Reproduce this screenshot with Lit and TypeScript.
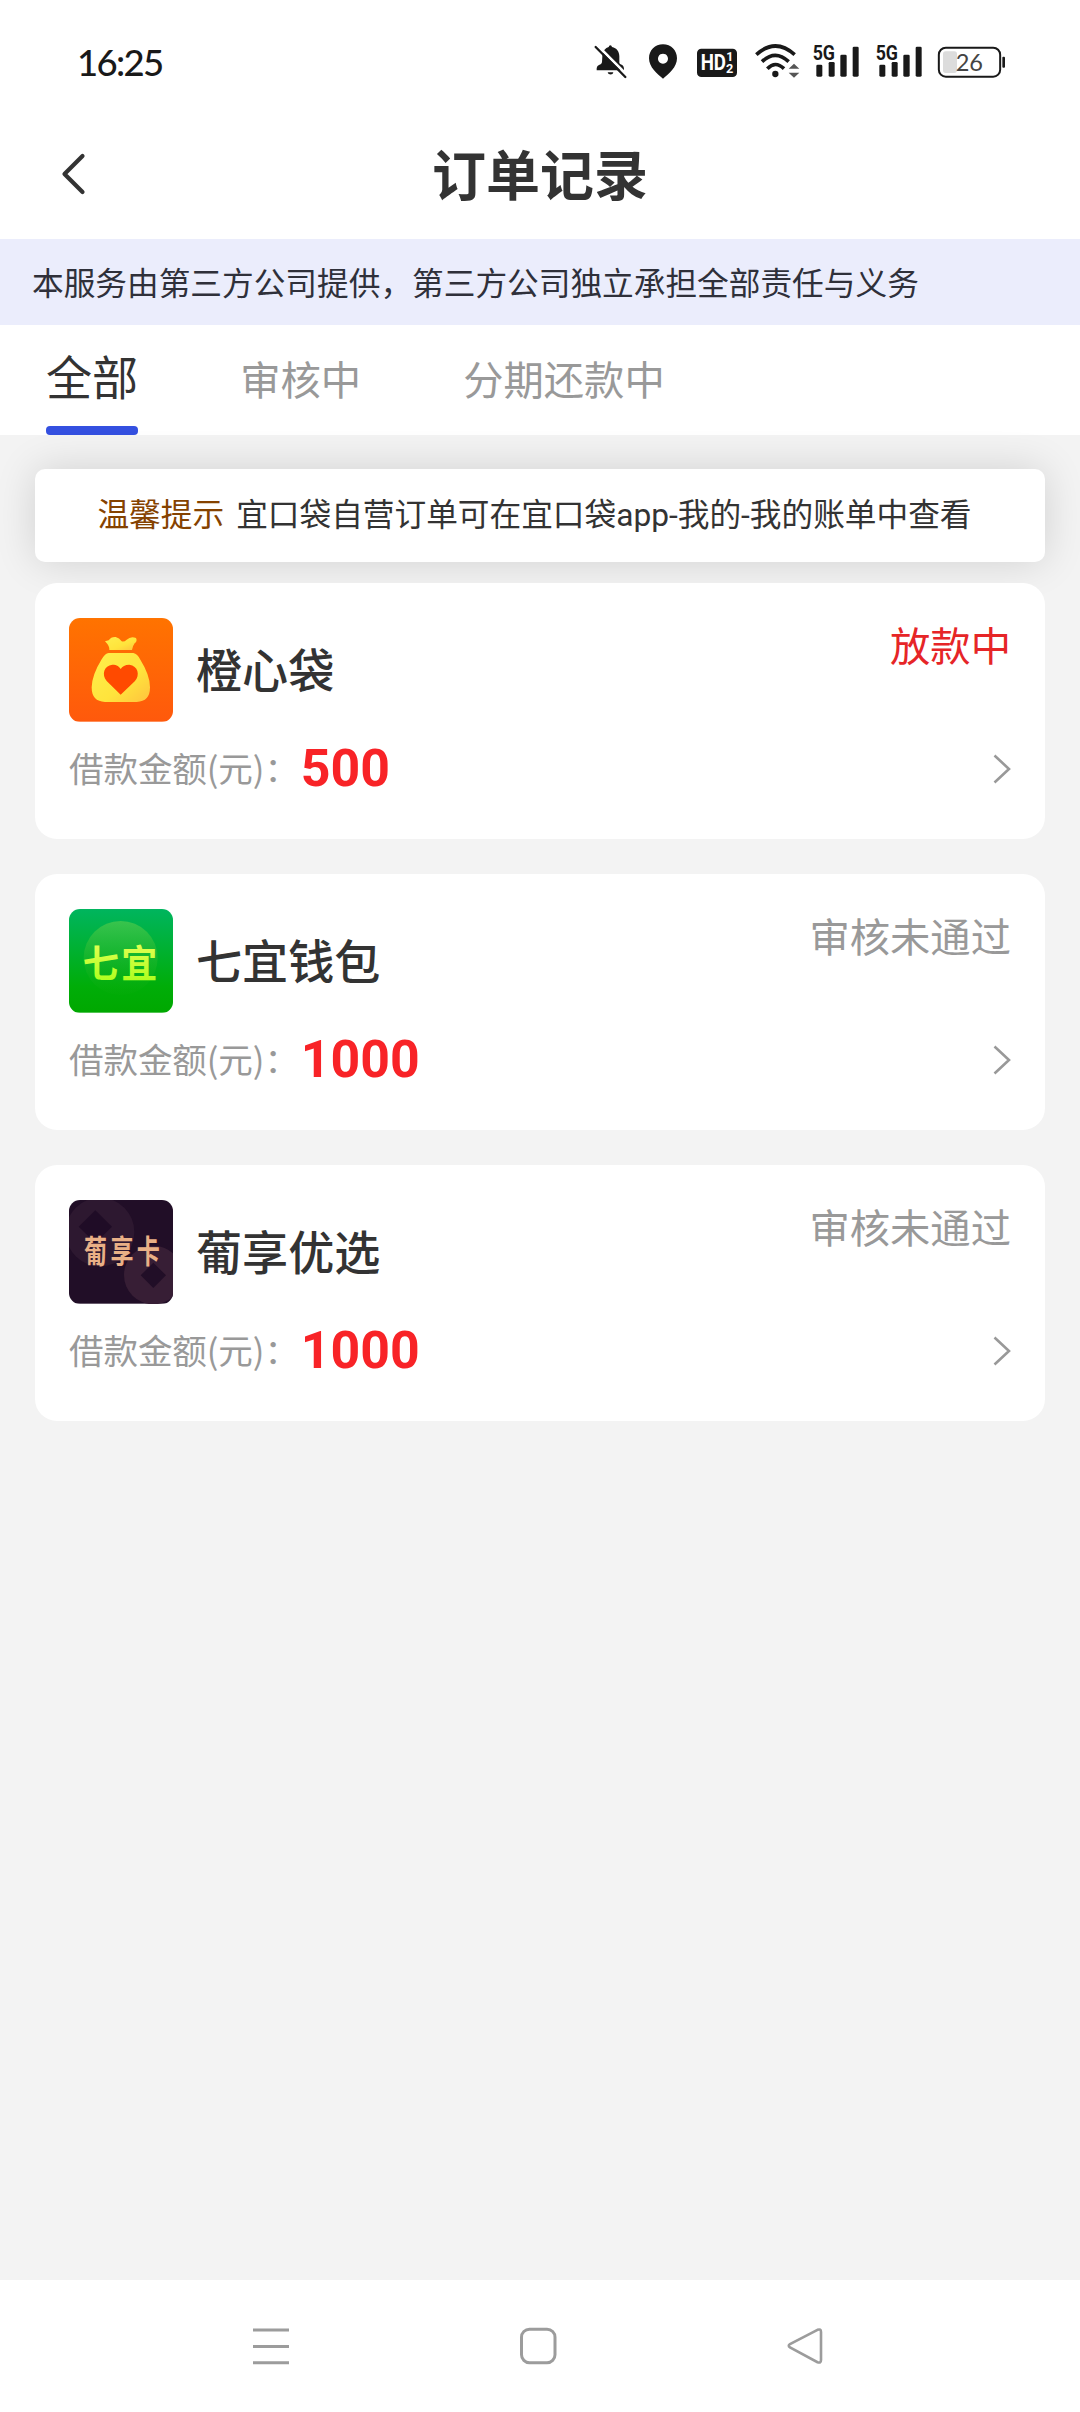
import { LitElement, html, css, svg } from "lit";
import { customElement, property } from "lit/decorators.js";
import { classMap } from "lit/directives/class-map.js";

interface Order {
  name: string;
  logo: "bag" | "qiyi" | "card";
  status: string;
  active: boolean;
  amount: string;
}

const ORDERS: Order[] = [
  { name: "橙心袋", logo: "bag", status: "放款中", active: true, amount: "500" },
  { name: "七宜钱包", logo: "qiyi", status: "审核未通过", active: false, amount: "1000" },
  { name: "葡享优选", logo: "card", status: "审核未通过", active: false, amount: "1000" },
];

const TABS = ["全部", "审核中", "分期还款中"];

const bagLogo = svg`
  <svg class="logo" viewBox="117 114 312 311">
    <defs>
      <linearGradient id="bg" x1="0" y1="0" x2="0" y2="1">
        <stop offset="0" stop-color="#ff7300" /><stop offset="1" stop-color="#ff590c" />
      </linearGradient>
      <linearGradient id="gold" x1="0" y1="0" x2="1" y2="1">
        <stop offset="0" stop-color="#ffee4c" /><stop offset=".6" stop-color="#ffe43c" /><stop offset="1" stop-color="#ffc23e" />
      </linearGradient>
    </defs>
    <rect x="117" y="114" width="312" height="311" fill="url(#bg)" />
    <path fill="url(#gold)" d="M225 184L236 181Q243 170 257 171Q268 174 275 184Q282 187 290 179Q303 167 318 174Q323 184 314 190Q309 196 306 210H238Q239 198 225 184Z" />
    <path fill="url(#gold)" d="M236 219H310Q322 221 331 239Q360 285 360 322Q360 365 320 366H225Q185 365 185 322Q186 285 215 238Q225 220 236 219Z" />
    <path fill="#ff4a00" d="M272 344L230 303C214 284 222 256 247 254C261 254 268 260 272 267C277 259 285 254 298 254C324 257 331 285 315 303Z" />
  </svg>`;

const qiyiLogo = svg`
  <svg class="logo" viewBox="117 117 312 311">
    <defs>
      <linearGradient id="bg" x1="0" y1="0" x2="0" y2="1">
        <stop offset="0" stop-color="#00b55e" /><stop offset=".75" stop-color="#00ad08" /><stop offset="1" stop-color="#00a800" />
      </linearGradient>
      <linearGradient id="disc" x1="0" y1="0" x2="0" y2="1">
        <stop offset="0" stop-color="#4cc94c" stop-opacity=".75" /><stop offset="1" stop-color="#12ad12" stop-opacity=".1" />
      </linearGradient>
      <linearGradient id="lime" x1="0" y1="0" x2="0" y2="1">
        <stop offset="0" stop-color="#f2ff62" /><stop offset="1" stop-color="#a4ff14" />
      </linearGradient>
    </defs>
    <rect x="117" y="117" width="312" height="311" fill="url(#bg)" />
    <circle cx="272" cy="264" r="111" fill="url(#disc)" />
    <text class="logo-text" transform="translate(158 320) scale(.95 1)" font-size="114" letter-spacing="8" fill="url(#lime)">七宜</text>
  </svg>`;

const cardLogo = svg`
  <svg class="logo" viewBox="117 117 312 311">
    <rect x="117" y="117" width="312" height="311" fill="#210e27" />
    <circle cx="210" cy="213" r="103" fill="#2d1830" />
    <path d="M196 148L246 197L196 246L146 197Z" fill="#1f0c26" />
    <circle cx="370" cy="342" r="88" fill="#371e35" />
    <path d="M370 305L408 343L370 381L332 343Z" fill="#210e27" />
    <text class="logo-text" transform="translate(162 307) scale(.72 1)" font-size="96" letter-spacing="14" fill="#e9b086">葡享卡</text>
  </svg>`;

const LOGOS = { bag: bagLogo, qiyi: qiyiLogo, card: cardLogo };

const signal = html`
  <svg class="icon signal" viewBox="36 70 144 108">
    <text class="cond" x="38" y="120" font-size="61" textLength="67" lengthAdjust="spacingAndGlyphs">5G</text>
    <rect x="49" y="135" width="18" height="36" rx="4" />
    <rect x="86" y="127" width="18" height="44" rx="4" />
    <rect x="121" y="105" width="19" height="66" rx="4" />
    <rect x="158" y="81" width="18" height="90" rx="4" />
  </svg>`;

@customElement("status-bar")
class StatusBar extends LitElement {
  static styles = css`
    :host {
      display: flex;
      justify-content: space-between;
      align-items: flex-start;
      box-sizing: border-box;
      height: 111px;
      padding: 43.3px 74px 0 77px;
      background: #fff;
      color: #191919;
    }
    .time {
      font: 500 36.500px/38px Lato, "Liberation Sans", sans-serif;
      letter-spacing: -1.700px;
    }
    .icons { display: flex; }
    .icon { display: block; height: 36px; fill: #191919; overflow: visible; }
    .bell { width: 34px; }
    .pin { width: 30px; margin-left: 20.7px; }
    .hd { width: 42px; margin-left: 18px; }
    .wifi { width: 46px; margin-left: 16px; }
    .signal { width: 48px; margin-left: 12px; }
    .signal + .signal { margin-left: 15.3px; }
    .battery { width: 69px; margin-left: 13.7px; }
    .cond { font-family: Roboto, sans-serif; font-weight: 700; }
    .thin { font-family: Lato, sans-serif; }
  `;
  render() {
    return html`
      <div class="time">16:25</div>
      <div class="icons">
        <svg class="icon bell" viewBox="70 70 102 108">
          <path d="M98 110C98 93 108 85 117 82Q118 77 122 77Q126 77 127 82C141 85 149 95 149 110V130Q150 134 156 135Q164 139 163 152H81Q80 139 88 136Q96 134 97 128Z" />
          <path d="M114 158H131C130 167 116 167 114 158Z" />
          <path d="M82 76L174 168" stroke="#fff" stroke-width="8" />
          <path d="M78 82L167 172" stroke="#191919" stroke-width="7" stroke-linecap="round" />
        </svg>
        <svg class="icon pin" viewBox="234 70 90 108">
          <path fill-rule="evenodd" d="M279 74C255 74 237 92 237 116C237 143 262 163 279 177C296 163 321 143 321 116C321 92 303 74 279 74ZM279 102A15 15 0 1 1 278.9 102Z" />
        </svg>
        <svg class="icon hd" viewBox="378 70 126 108">
          <rect x="381" y="87" width="120" height="85" rx="13" />
          <g class="cond" fill="#fff">
            <text x="392" y="152" font-size="65" textLength="76" lengthAdjust="spacingAndGlyphs">HD</text>
            <text x="469" y="125" font-size="37">1</text>
            <text x="468" y="161" font-size="38">2</text>
          </g>
        </svg>
        <svg class="icon wifi" viewBox="552 70 138 108">
          <g fill="none" stroke="#191919" stroke-width="11">
            <path d="M559 105Q616 53 674 105" />
            <path d="M576 126Q616 88 656 126" />
            <path d="M592 147Q616 122 642 147" />
          </g>
          <circle cx="616" cy="163" r="9.5" />
          <path fill="#555" d="M656 147L672 132L688 147ZM656 159H688L672 174Z" />
        </svg>
        ${signal}${signal}
        <svg class="icon battery" viewBox="411 70 207 108">
          <rect x="429" y="95" width="42" height="65" rx="8" fill="#dcdcdc" />
          <rect x="416.500" y="84" width="184" height="87" rx="21" fill="none" stroke="#191919" stroke-width="6" />
          <rect x="607" y="111" width="8" height="33" rx="3" />
          <text class="thin" x="467" y="153" font-size="71" textLength="82" lengthAdjust="spacingAndGlyphs" fill="#444">26</text>
        </svg>
      </div>
    `;
  }
}

@customElement("order-card")
class OrderCard extends LitElement {
  @property({ attribute: false }) order!: Order;
  static styles = css`
    :host {
      display: flex;
      flex-direction: column;
      box-sizing: border-box;
      height: 256px;
      padding: 35px 34px 0 34px;
      border-radius: 22px;
      background: #fff;
    }
    .top { display: flex; height: 104px; }
    .logo { display: block; width: 104px; height: 103.700px; border-radius: 11px; }
    .logo-text { font-family: "Noto Sans CJK SC", sans-serif; font-weight: 700; }
    .name {
      flex: 1;
      padding-left: 23px;
      font-size: 46.080px;
      line-height: 100px;
      font-weight: 500;
      color: #333;
    }
    .status { font-size: 40.320px; line-height: 52px; color: #999; }
    .status.active { color: #e62527; }
    .bottom { display: flex; align-items: center; height: 94px; }
    .label { font-size: 34.560px; line-height: 50px; padding-bottom: 4px; color: #999; letter-spacing: -0.100px; }
    .amount {
      flex: 1;
      padding-left: 2px;
      font: 700 51.840px/60px Roboto, sans-serif;
      color: #f82327;
    }
    .arrow { width: 18px; height: 30px; }
  `;
  render() {
    const o = this.order;
    return html`
      <div class="top">
        ${LOGOS[o.logo]}
        <div class="name">${o.name}</div>
        <div class=${classMap({ status: true, active: o.active })}>${o.status}</div>
      </div>
      <div class="bottom">
        <span class="label">借款金额(元)：</span>
        <span class="amount">${o.amount}</span>
        <svg class="arrow" viewBox="0 0 18 30">
          <path d="M1.500 1.500L16 15L1.500 28.500" fill="none" stroke="#999" stroke-width="2.600" />
        </svg>
      </div>
    `;
  }
}

@customElement("app-root")
class AppRoot extends LitElement {
  static styles = css`
    :host {
      display: flex;
      flex-direction: column;
      height: 2412px;
      background: #f3f3f3;
      color: #333;
      font-family: "Noto Sans CJK SC", sans-serif;
    }
    .header {
      display: grid;
      grid-template-columns: 100px 1fr 100px;
      align-items: center;
      height: 128px;
      background: #fff;
    }
    .back { width: 26px; height: 44px; margin: 0 0 2px 61px; }
    .title {
      margin: 0;
      padding-bottom: 5px;
      text-align: center;
      font-size: 54px;
      line-height: 116px;
      font-weight: 700;
    }
    .notice {
      height: 86px;
      padding-left: 32px;
      background: #ebedfc;
      font-size: 31.680px;
      line-height: 84px;
      color: #2f303a;
      white-space: nowrap;
    }
    .tabs {
      display: flex;
      gap: 102px;
      height: 110px;
      padding-left: 46px;
      background: #fff;
    }
    .tab {
      box-sizing: border-box;
      font-size: 40.320px;
      line-height: 106px;
      color: #999;
    }
    .tab.on {
      height: 110px;
      font-size: 46.080px;
      line-height: 100px;
      color: #333;
    }
    .tab.on::after {
      content: "";
      display: block;
      height: 9px;
      margin-top: 1px;
      border-radius: 4px;
      background: #3450e0;
    }
    .content {
      flex: 1;
      display: flex;
      flex-direction: column;
      padding: 34px 35px 0;
    }
    .tip {
      display: flex;
      justify-content: center;
      gap: 12px;
      box-sizing: border-box;
      height: 93px;
      padding-right: 11px;
      margin-bottom: 21px;
      border-radius: 10px;
      background: #fff;
      box-shadow: 0 0 42px rgba(0, 0, 0, 0.14);
      font-family: Roboto, "Noto Sans CJK SC", sans-serif;
      font-size: 31.680px;
      line-height: 94px;
      white-space: nowrap;
    }
    .tip-title { color: #854200; }
    .list { display: flex; flex-direction: column; gap: 35px; }
    .nav {
      display: flex;
      align-items: center;
      justify-content: space-between;
      box-sizing: border-box;
      height: 132px;
      padding: 0 256px 0 252px;
      background: #fff;
    }
    .nav svg { width: 38px; height: 38px; }
  `;
  render() {
    return html`
      <status-bar></status-bar>
      <div class="header">
        <svg class="back" viewBox="0 0 26 44">
          <path d="M21.500 4L3.500 22L21.500 40" fill="none" stroke="#333" stroke-width="4.200" stroke-linecap="round" stroke-linejoin="round" />
        </svg>
        <h1 class="title">订单记录</h1>
      </div>
      <div class="notice">本服务由第三方公司提供，第三方公司独立承担全部责任与义务</div>
      <div class="tabs">
        ${TABS.map((t, i) => html`<div class=${classMap({ tab: true, on: i === 0 })}>${t}</div>`)}
      </div>
      <div class="content">
        <div class="tip">
          <span class="tip-title">温馨提示</span>
          <span>宜口袋自营订单可在宜口袋app-我的-我的账单中查看</span>
        </div>
        <div class="list">
          ${ORDERS.map((o) => html`<order-card .order=${o}></order-card>`)}
        </div>
      </div>
      <div class="nav">
        <svg viewBox="0 0 38 38"><path d="M1 3H37M1 19.500H37M1 35.800H37" stroke="#9c9c9c" stroke-width="3" /></svg>
        <svg viewBox="0 0 38 38"><rect x="2.500" y="2.200" width="33.500" height="33.500" rx="8" fill="none" stroke="#9c9c9c" stroke-width="3" /></svg>
        <svg viewBox="0 0 38 38"><path d="M31.500 2.800L4 17Q1.500 18.700 4 20.500L31.500 35.200Q35 36.500 35 33V5Q35 1.500 31.500 2.800Z" fill="none" stroke="#9c9c9c" stroke-width="2.600" /></svg>
      </div>
    `;
  }
}
